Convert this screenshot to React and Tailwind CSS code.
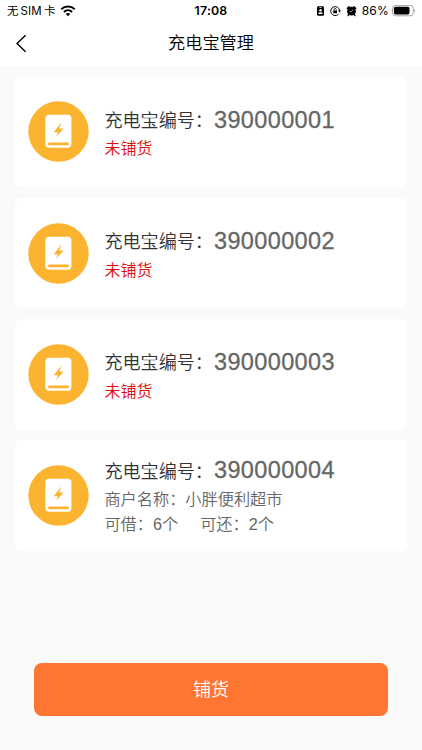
import React from 'react';

const powerBanks = [
    { id: '390000001' },
    { id: '390000002' },
    { id: '390000003' },
    { id: '390000004', shop: '小胖便利超市', borrow: 6, giveBack: 2 },
];

const StatusBar = () => {
    return (
        <div className="relative flex h-[22px] items-center justify-between pl-[7px] pr-[6px] text-black">
            <div className="flex items-center">
                <span className="flex items-center text-[11.5px] font-normal leading-none">
                    <span>无</span>
                    <span className="ml-[2px] pt-px font-['Inter'] tracking-[0.2px]">SIM</span>
                    <span className="ml-[2px]">卡</span>
                </span>
                <svg className="ml-[5px] h-[12px] w-[16px]" viewBox="0 0 16 12" fill="none">
                    <path d="M1.3 4.2C5.1 0.6 10.9 0.6 14.7 4.2" stroke="#000" strokeWidth="2.1" />
                    <path d="M3.9 6.9C6.3 4.7 9.7 4.7 12.1 6.9" stroke="#000" strokeWidth="2" />
                    <path d="M8 11.2L5.7 8.8C7 7.6 9 7.6 10.3 8.8Z" fill="#000" />
                </svg>
            </div>
            <span className="absolute left-1/2 -translate-x-1/2 font-['Inter'] text-[12.3px] font-semibold leading-none tracking-[0.2px]">17:08</span>
            <div className="flex items-center">
                <svg className="h-[10px] w-[7px]" viewBox="0 0 8 11">
                    <rect width="8" height="11" rx="1.5" fill="#000" />
                    <rect x="2.7" y="0.9" width="2.6" height="0.9" rx="0.4" fill="#fff" />
                    <circle cx="4" cy="4.6" r="1.4" fill="#fff" />
                    <path d="M1.4 9C1.4 6.1 6.6 6.1 6.6 9Z" fill="#fff" />
                </svg>
                <svg className="ml-[6px] h-[11px] w-[11px]" viewBox="0 0 11 11" fill="none">
                    <path d="M8.4 8.3A4.5 4.5 0 1 1 9.7 4.7" stroke="#000" strokeWidth="1" />
                    <path d="M8.1 4.5H11L9.6 6.5Z" fill="#000" />
                    <rect x="3.2" y="4.4" width="3.8" height="2.9" rx="0.4" fill="#000" />
                    <path d="M4 4.5V3.6C4 2 6.2 2 6.2 3.6V4.5" stroke="#000" strokeWidth="0.8" />
                </svg>
                <svg className="ml-[5px] h-[11px] w-[11px]" viewBox="0 0 11 11" fill="none">
                    <circle cx="5.5" cy="5.2" r="4.4" fill="#000" />
                    <path d="M1.5 2.3L3 1M9.5 2.3L8 1" stroke="#000" strokeWidth="1.7" strokeLinecap="round" />
                    <path d="M2.7 8.6L2 9.6M8.3 8.6L9 9.6" stroke="#000" strokeWidth="1.3" strokeLinecap="round" />
                    <path d="M7 3.5L5.5 5.5H3.8" stroke="#fff" strokeWidth="0.6" />
                </svg>
                <span className="ml-[5px] font-['Inter'] text-[12px] font-normal leading-none tracking-[0.2px]">86%</span>
                <svg className="ml-[3px] h-[12px] w-[24px]" viewBox="0 0 24 12">
                    <rect x="0.5" y="0.4" width="20.8" height="10.4" rx="3" fill="none" stroke="#999" strokeWidth="0.9" />
                    <rect x="1.9" y="1.8" width="15.6" height="7.6" rx="1.7" fill="#000" />
                    <path d="M22.4 4.1C23.6 4.6 23.6 6.8 22.4 7.3Z" fill="#999" />
                </svg>
            </div>
        </div>
    );
};

const PowerBankIcon = () => {
    return (
        <svg className="h-[61px] w-[61px] shrink-0" viewBox="0 0 61 61">
            <circle cx="30.5" cy="30.5" r="30.2" fill="#fcb32f" />
            <rect x="17.4" y="13.7" width="26" height="33" rx="3.6" fill="#fff" />
            <path d="M33.6 21.2L25.7 31.2H30L28.1 36L35.5 27.4H31.2Z" fill="#fcb32f" />
            <path d="M21.4 42.9H39.6" stroke="#fcb32f" strokeWidth="2.7" strokeLinecap="round" />
        </svg>
    );
};

const PowerBankCard = ({ item }) => {
    return (
        <div className="flex h-[110.5px] items-center rounded-[6px] bg-white pl-[13px]">
            <PowerBankIcon />
            <div className="ml-[15.4px] pt-[2px]">
                <div className="flex h-[28px] items-center">
                    <span className="w-[109.6px] whitespace-nowrap text-[18.1px] text-[#333]">充电宝编号：</span>
                    <span className="pt-[2px] font-['Liberation_Sans'] text-[23.5px] leading-none tracking-[0.37px] text-[#666] [-webkit-text-stroke:0.3px_#666]">{item.id}</span>
                </div>
                {item.shop ? (
                    <div className="mt-[2px] text-[16.2px] leading-[25px] text-[#666]">
                        <p>商户名称：{item.shop}</p>
                        <p className="flex">
                            <span>可借：<span className="font-['Liberation_Sans']">{item.borrow}</span>个</span>
                            <span className="ml-[22px]">可还：<span className="font-['Liberation_Sans']">{item.giveBack}</span>个</span>
                        </p>
                    </div>
                ) : (
                    <p className="mt-[2px] text-[16px] leading-[25px] text-[#e00b0b]">未铺货</p>
                )}
            </div>
        </div>
    );
};

const App = () => {
    return (
        <div lang="zh-CN" className="flex h-[750px] w-[422px] flex-col overflow-hidden bg-[#fafafa] font-['Noto_Sans_CJK_SC',sans-serif] font-[350]">
            <header className="h-[66px] bg-white">
                <StatusBar />
                <div className="relative flex h-[41px] items-center justify-center">
                    <button type="button" className="absolute left-[16px] top-[12px]">
                        <svg className="h-[19px] w-[11px]" viewBox="0 0 11 19" fill="none">
                            <path d="M9.6 1.3L1 9.5L9.6 17.7" stroke="#000" strokeWidth="1.4" />
                        </svg>
                    </button>
                    <h1 className="pb-px text-[17.2px] text-black">充电宝管理</h1>
                </div>
            </header>
            <main className="flex flex-1 flex-col gap-[10.8px] px-[15px] pt-[10.5px]">
                {powerBanks.map((item) => (
                    <PowerBankCard key={item.id} item={item} />
                ))}
            </main>
            <footer className="px-[34px] pb-[34px]">
                <button type="button" className="h-[53px] w-full rounded-[8px] bg-[#ff7633] pb-[3px] text-[18px] text-white">铺货</button>
            </footer>
        </div>
    );
};

export default App;
